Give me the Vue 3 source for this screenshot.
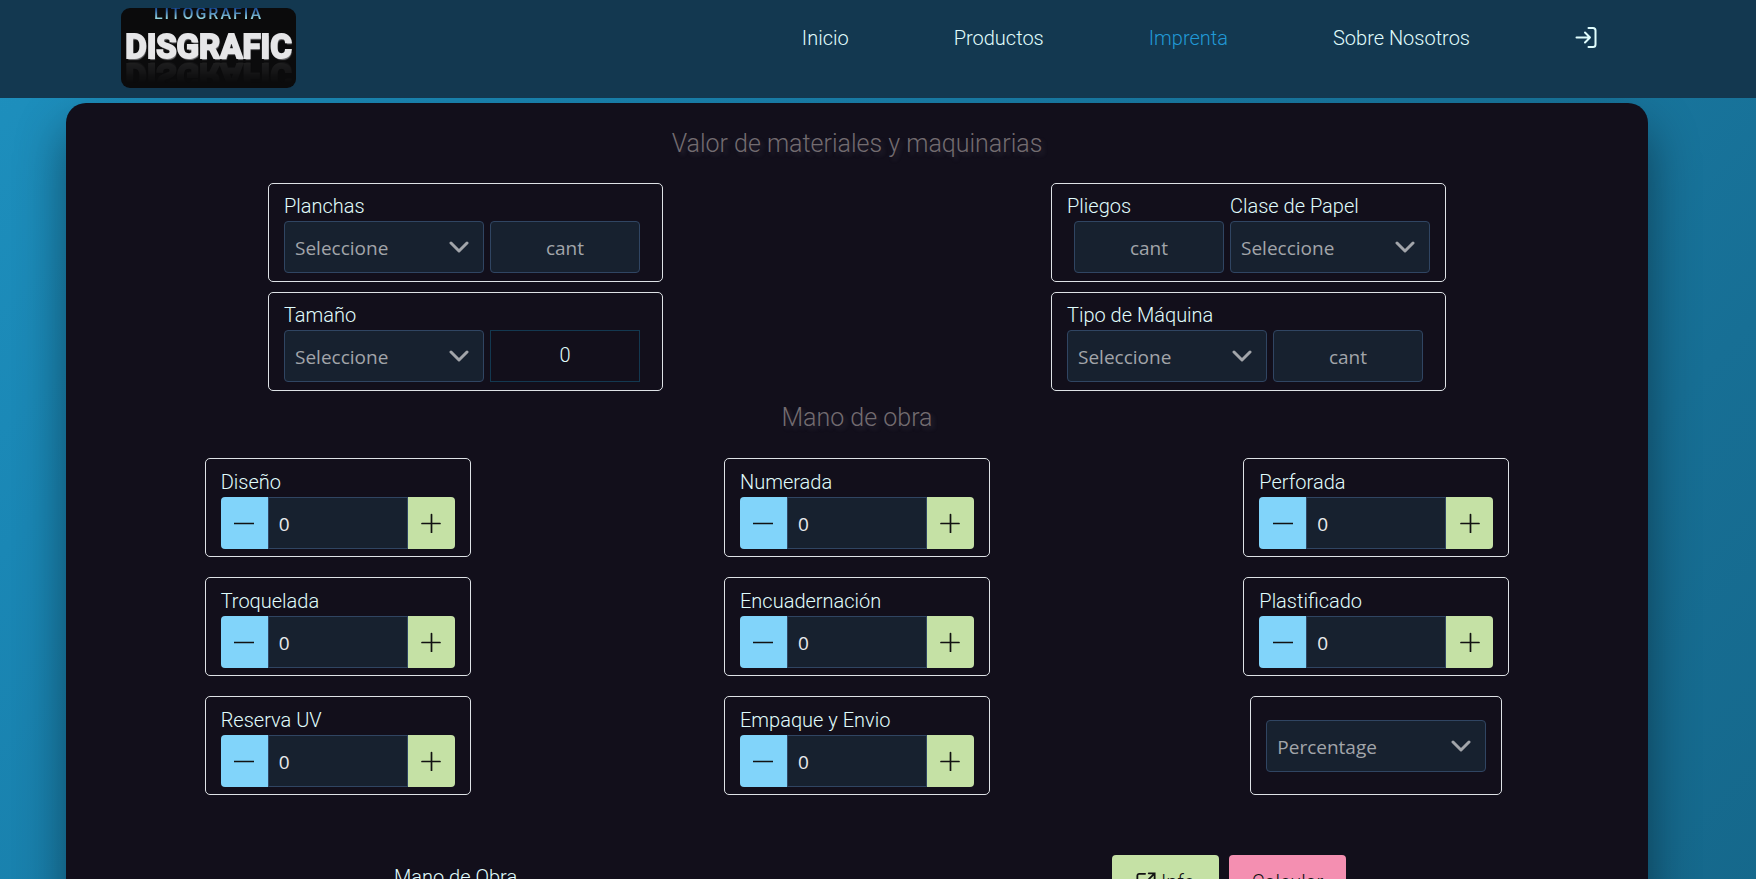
<script setup>
import { ref } from 'vue'

const links = [
  { label: 'Inicio' },
  { label: 'Productos' },
  { label: 'Imprenta', active: true },
  { label: 'Sobre Nosotros' },
]

const tasks = ref([
  { id: 'diseno', label: 'Diseño', value: 0 },
  { id: 'numerada', label: 'Numerada', value: 0 },
  { id: 'perforada', label: 'Perforada', value: 0 },
  { id: 'troquelada', label: 'Troquelada', value: 0 },
  { id: 'encuadernacion', label: 'Encuadernación', value: 0 },
  { id: 'plastificado', label: 'Plastificado', value: 0 },
  { id: 'reserva', label: 'Reserva UV', value: 0 },
  { id: 'empaque', label: 'Empaque y Envio', value: 0 },
])
</script>

<template>
  <div class="page">
    <header class="topbar">
      <a class="logo" href="#">
        <span class="logo-small">LITOGRAFIA</span>
        <span class="logo-big">DISGRAFIC</span>
      </a>
      <nav class="nav">
        <a v-for="l in links" :key="l.label" href="#" :class="{ active: l.active }">{{ l.label }}</a>
        <a href="#" class="login" aria-label="Login">
          <svg width="22" height="22" viewBox="0 0 22 22" fill="none" stroke="currentColor" stroke-width="2" stroke-linecap="round" stroke-linejoin="round">
            <path d="M13.500 1H18a2.500 2.500 0 0 1 2.500 2.500V17.500a2.500 2.500 0 0 1-2.500 2.500H13.500M1.500 10.500H15M10 5.500l5 5-5 5" />
          </svg>
        </a>
      </nav>
    </header>

    <main class="panel">
      <h2>Valor de materiales y maquinarias</h2>
      <div class="materials">
        <div class="box wide">
          <div class="field">
            <label for="planchas">Planchas</label>
            <div class="select">
              <select id="planchas"><option>Seleccione</option></select>
              <svg class="chev" viewBox="0 0 20 12"><path d="M2 2l8 8 8-8" /></svg>
            </div>
          </div>
          <input class="qty" placeholder="cant" aria-label="Cantidad de planchas" />
        </div>
        <div class="box wide">
          <div class="field">
            <label for="pliegos">Pliegos</label>
            <input id="pliegos" class="qty indent" placeholder="cant" />
          </div>
          <div class="field">
            <label for="papel">Clase de Papel</label>
            <div class="select">
              <select id="papel"><option>Seleccione</option></select>
              <svg class="chev" viewBox="0 0 20 12"><path d="M2 2l8 8 8-8" /></svg>
            </div>
          </div>
        </div>
        <div class="box wide">
          <div class="field">
            <label for="tamano">Tamaño</label>
            <div class="select">
              <select id="tamano"><option>Seleccione</option></select>
              <svg class="chev" viewBox="0 0 20 12"><path d="M2 2l8 8 8-8" /></svg>
            </div>
          </div>
          <output class="result" for="tamano">0</output>
        </div>
        <div class="box wide">
          <div class="field">
            <label for="maquina">Tipo de Máquina</label>
            <div class="select">
              <select id="maquina"><option>Seleccione</option></select>
              <svg class="chev" viewBox="0 0 20 12"><path d="M2 2l8 8 8-8" /></svg>
            </div>
          </div>
          <input class="qty" placeholder="cant" aria-label="Cantidad de máquina" />
        </div>
      </div>

      <h2 class="second">Mano de obra</h2>
      <div class="labor">
        <div v-for="t in tasks" :key="t.id" class="box task">
          <label :for="t.id">{{ t.label }}</label>
          <div class="stepper">
            <button class="minus" :aria-label="'Restar ' + t.label" @click="t.value--">
              <svg viewBox="0 0 20 20"><path d="M0.500 10.500h19" /></svg>
            </button>
            <input :id="t.id" v-model.number="t.value" inputmode="numeric" />
            <button class="plus" :aria-label="'Sumar ' + t.label" @click="t.value++">
              <svg viewBox="0 0 20 20"><path d="M1 10.500h18M10.500 1.500v18" /></svg>
            </button>
          </div>
        </div>
        <div class="box percent">
          <div class="select">
            <select aria-label="Percentage"><option>Percentage</option></select>
            <svg class="chev" viewBox="0 0 20 12"><path d="M2 2l8 8 8-8" /></svg>
          </div>
        </div>
      </div>

      <div class="footer">
        <div class="total">Mano de Obra</div>
        <div class="actions">
          <button class="info">
            <svg viewBox="0 0 22 22"><path d="M10 2H3.500A2 2 0 0 0 1.500 4V18.500a2 2 0 0 0 2 2H17a2 2 0 0 0 2-2V12M14 1.500h6.500V8M20.500 1.500L9 13" /></svg>
            <span>Info</span>
          </button>
          <button class="calc">Calcular</button>
        </div>
      </div>
    </main>
  </div>
</template>

<style>
html {
  scrollbar-width: none;
}
body {
  margin: 0;
}
</style>

<style scoped>
* {
  box-sizing: border-box;
}
.page {
  min-height: 100vh;
  padding-bottom: 40px;
  background: linear-gradient(135deg, #1e90be 0%, #1a87b5 20%, #176f95 75%, #15678a 100%);
  font-family: Roboto, "Liberation Sans", sans-serif;
  font-weight: 300;
  font-size: 20px;
  line-height: 24px;
  color: #e0fdfd;
}
.topbar {
  position: relative;
  display: flex;
  justify-content: space-between;
  align-items: flex-start;
  height: 98px;
  padding: 8px 159px 0 121px;
  background: #133850;
}
.logo {
  display: flex;
  flex-direction: column;
  align-items: center;
  width: 175px;
  height: 80px;
  border-radius: 9px;
  overflow: hidden;
  background: #0b0b0c;
  text-decoration: none;
}
.logo-small {
  margin-top: -3px;
  font-family: Roboto, sans-serif;
  font-weight: 500;
  font-size: 16px;
  line-height: 18px;
  letter-spacing: 2px;
  background: linear-gradient(#1b4f9e 20%, #9fe0e4 80%);
  -webkit-background-clip: text;
  background-clip: text;
  color: transparent;
}
.logo-big {
  font-family: Roboto, "Liberation Sans", sans-serif;
  font-weight: 700;
  font-size: 33px;
  line-height: 40px;
  margin-top: 4px;
  color: #e6e6e8;
  -webkit-text-stroke: 2px #e6e6e8;
  text-shadow: 1px 2px 1px #77777a;
  -webkit-box-reflect: below -12px linear-gradient(transparent 30%, rgba(255, 255, 255, 0.12));
}
.nav {
  display: flex;
  align-items: center;
  gap: 105px;
  padding-top: 18px;
}
.nav a {
  color: #e0fdfd;
  text-decoration: none;
}
.nav a.active {
  color: #2199d6;
}
.login svg {
  display: block;
}
.panel {
  margin: 5px 108px 0 66px;
  padding: 25px 8px 60px;
  border-radius: 20px;
  background: #120f1b;
  box-shadow: 0 25px 50px rgba(0, 0, 0, 0.45);
}
h2 {
  margin: 0;
  text-align: center;
  font-size: 25px;
  line-height: 32px;
  font-weight: 300;
  color: #736c70;
  text-shadow: 3px 3px 4px rgba(90, 90, 110, 0.3);
}
h2.second {
  margin-top: 11px;
}
.materials {
  display: grid;
  grid-template-columns: 1fr 1fr;
  justify-items: center;
  gap: 10px 0;
  margin-top: 23px;
}
.box {
  height: 99px;
  border: 1px solid #dee2e6;
  border-radius: 5px;
  padding: 10px 15px 0;
}
.wide {
  display: flex;
  align-items: flex-end;
  gap: 6px;
  width: 395px;
  padding-bottom: 8px;
}
label {
  display: block;
  margin-bottom: 3px;
}
.select {
  position: relative;
  width: 200px;
  height: 52px;
}
select,
input {
  display: block;
  height: 52px;
  margin: 0;
  border: 1px solid #304562;
  border-radius: 4px;
  background: #17212f;
  color: #a2a5aa;
  font-family: "Open Sans", "Noto Sans", sans-serif;
  font-weight: 400;
  font-size: 19px;
}
select {
  width: 100%;
  padding: 2px 40px 0 10px;
  appearance: none;
}
.chev {
  position: absolute;
  right: 15px;
  top: 20px;
  width: 20px;
  height: 12px;
  fill: none;
  stroke: #a2a5aa;
  stroke-width: 3;
  stroke-linecap: round;
  stroke-linejoin: round;
  pointer-events: none;
}
.qty {
  width: 150px;
  padding: 2px 0 0;
  text-align: center;
}
.qty::placeholder {
  color: #a2a5aa;
  opacity: 1;
}
.indent {
  margin-left: 7px;
}
.result {
  display: flex;
  align-items: center;
  justify-content: center;
  width: 150px;
  height: 52px;
  padding-bottom: 2px;
  border: 1px solid #133850;
}
.labor {
  display: grid;
  grid-template-columns: repeat(3, 1fr);
  justify-items: center;
  row-gap: 20px;
  margin: 24px 4px 0;
}
.task {
  width: 266px;
  padding-top: 11px;
}
.stepper {
  display: flex;
}
.stepper input {
  flex: 1;
  min-width: 0;
  padding: 2px 10px 0;
  border-radius: 0;
  color: #e9eaec;
}
button {
  display: flex;
  align-items: center;
  justify-content: center;
  height: 52px;
  border: 0;
  padding: 0;
  color: #121212;
  font: inherit;
}
.stepper button {
  width: 47px;
}
.minus {
  background: #81d4fa;
  border-radius: 4px 0 0 4px;
}
.plus {
  background: #c5e1a5;
  border-radius: 0 4px 4px 0;
}
button svg {
  width: 20px;
  height: 20px;
  fill: none;
  stroke: #121212;
  stroke-width: 2;
  stroke-linecap: round;
}
.stepper svg {
  stroke-width: 1.7;
}
.percent {
  display: flex;
  align-items: center;
  width: 252px;
  padding-top: 0;
}
.percent .select {
  width: 100%;
}
.footer {
  display: grid;
  grid-template-columns: 1fr 1fr;
  justify-items: center;
  margin-top: 60px;
}
.total {
  width: 143px;
  padding-top: 10px;
}
.actions {
  display: flex;
  gap: 10px;
  width: 273px;
}
.actions button {
  padding-top: 2px;
}
.info {
  gap: 5px;
  width: 107px;
  border-radius: 4px;
  background: #c5e1a5;
}
.calc {
  width: 117px;
  border-radius: 4px;
  background: #f48fb1;
}
</style>
